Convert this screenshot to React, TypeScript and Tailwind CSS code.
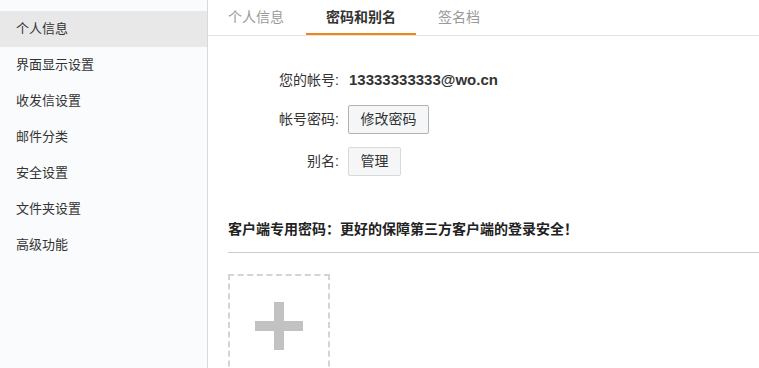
import React from "react";

const font = { fontFamily: '"Liberation Sans", "Noto Sans CJK SC", sans-serif' };

const menu = ["个人信息", "界面显示设置", "收发信设置", "邮件分类", "安全设置", "文件夹设置", "高级功能"];

export default function App() {
  return (
    <div className="flex h-[368px] w-[759px] overflow-hidden bg-white text-[#333]" style={font}>
      <aside className="flex w-[208px] shrink-0 flex-col border-r border-[#d9d9d9] bg-[#fafbfc] pt-[11px]">
        {menu.map((m, i) => (
          <div
            key={m}
            className={`flex h-9 items-center pl-4 text-[13px] ${i === 0 ? "bg-[#e8e8e8]" : ""}`}
          >
            {m}
          </div>
        ))}
      </aside>
      <main className="flex min-w-0 flex-1 flex-col">
        <div className="flex h-9 gap-[2px] border-b border-[#e3e3e3]">
          <div className="flex h-[35px] items-center px-5 text-[14px] text-[#999]">个人信息</div>
          <div className="flex h-[35px] items-center border-b-2 border-[#f08519] px-5 pt-[2px] text-[14px] font-bold text-[#333]">
            密码和别名
          </div>
          <div className="flex h-[35px] items-center px-5 text-[14px] text-[#999]">签名档</div>
        </div>
        <div className="flex flex-col pt-[29px]">
          <div className="flex h-[30px] items-center">
            <div className="w-[131px] text-right text-[14px] text-[#333]">您的帐号:</div>
            <div className="pl-[10px] text-[15px] font-bold text-[#333]">13333333333@wo.cn</div>
          </div>
          <div className="mt-[10px] flex h-[29px] items-center">
            <div className="w-[131px] text-right text-[14px] text-[#333]">帐号密码:</div>
            <div className="pl-[9px]">
              <button className="flex h-[29px] w-[81px] items-center justify-center rounded-[2px] border border-[#b3b3b3] bg-[#f5f6f8] text-[14px] text-[#333]">
                修改密码
              </button>
            </div>
          </div>
          <div className="mt-[13px] flex h-[29px] items-center">
            <div className="w-[131px] text-right text-[14px] text-[#333]">别名:</div>
            <div className="pl-[9px]">
              <button className="flex h-[29px] w-[53px] items-center justify-center rounded-[2px] border border-[#d9d9d9] bg-[#f5f6f8] text-[14px] text-[#333]">
                管理
              </button>
            </div>
          </div>
        </div>
        <div className="ml-5 mt-[43px] flex flex-col">
          <div className="pb-[12px] text-[14px] font-bold text-[#222]">
            客户端专用密码：更好的保障第三方客户端的登录安全！
          </div>
          <div className="h-px bg-[#cccccc]" />
          <div className="mt-[21px] flex h-[102px] w-[102px] items-center justify-center border-2 border-dashed border-[#d4d4d4]">
            <svg width="48" height="48" viewBox="0 0 48 48" className="mt-[2px]">
              <rect x="19" y="0" width="10" height="48" fill="#c2c2c2" />
              <rect x="0" y="19" width="48" height="10" fill="#c2c2c2" />
            </svg>
          </div>
        </div>
      </main>
    </div>
  );
}
